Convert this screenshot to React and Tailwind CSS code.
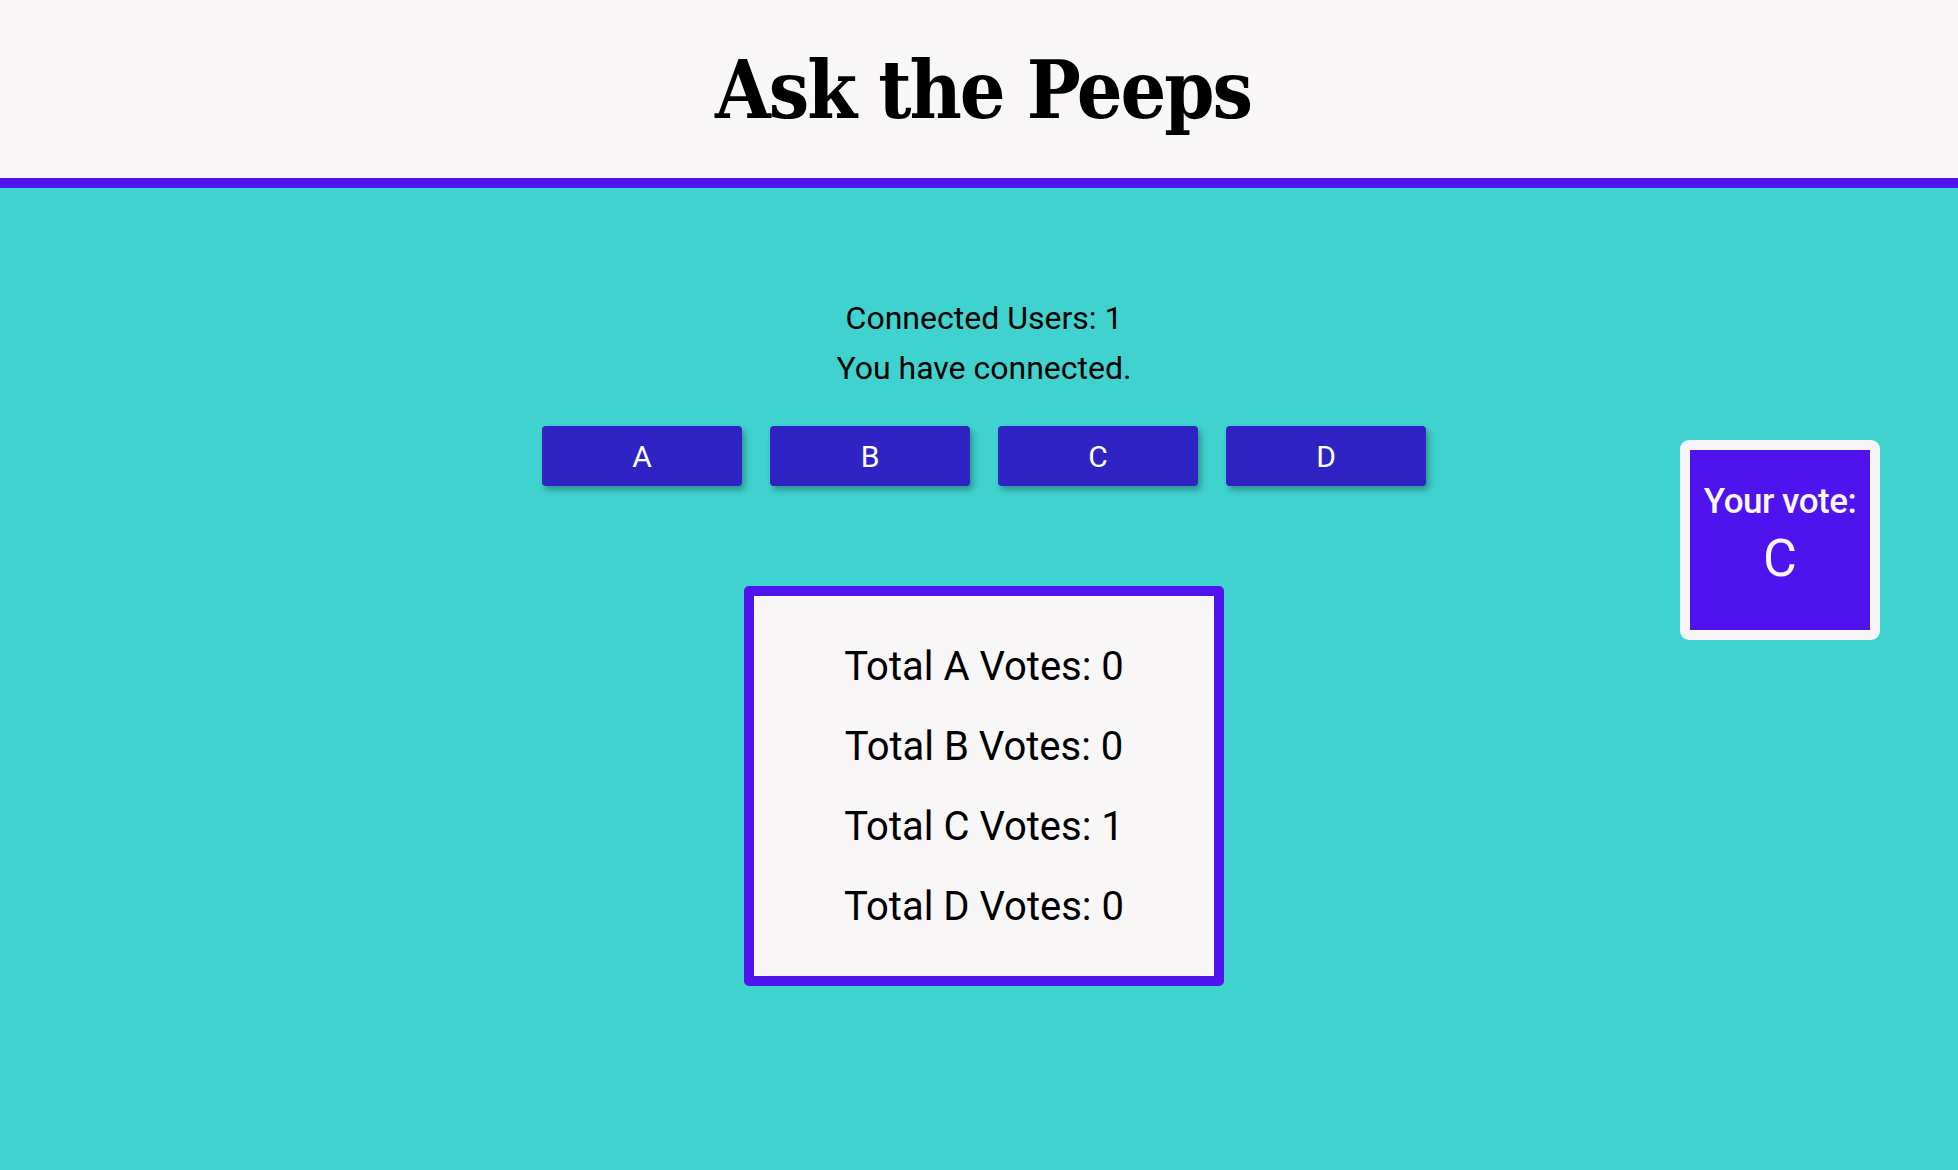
import React from "react";

export default function App() {
  const counts = [
    ["A", 0],
    ["B", 0],
    ["C", 1],
    ["D", 0],
  ];
  return (
    <div className="min-h-[1170px] w-full bg-[#40d2ce] font-['Roboto',sans-serif] text-black">
      <header className="h-[188px] bg-[#f8f6f7] border-b-[10px] border-[#4f14ed] flex items-center justify-center pl-[8px]">
        <h1 className="font-['DejaVu_Serif_Condensed','DejaVu_Serif',serif] font-bold text-[80px] leading-none tracking-[-2px] mt-[2px]">
          Ask the Peeps
        </h1>
      </header>
      <main className="relative flex flex-col items-center pl-[10px] pt-[105px]">
        <p className="text-[32px] leading-[50px]">Connected Users: 1</p>
        <p className="text-[32px] leading-[50px]">You have connected.</p>
        <div className="mt-[33px] flex gap-[28px]">
          {["A", "B", "C", "D"].map((l) => (
            <button
              key={l}
              className="w-[200px] h-[60px] rounded-[4px] bg-[#3023c4] text-white text-[30px] shadow-[3px_4px_6px_rgba(0,0,0,0.3)] flex items-center justify-center"
            >
              {l}
            </button>
          ))}
        </div>
        <div className="mt-[100px] w-[480px] h-[400px] border-[10px] border-[#4f14ed] rounded-[5px] bg-[#f8f6f7] pt-[31px] flex flex-col items-center">
          {counts.map(([l, n]) => (
            <p key={l} className="text-[40px] leading-[80px]">
              Total {l} Votes: {n}
            </p>
          ))}
        </div>
        <div className="absolute right-[78px] top-[252px] w-[200px] h-[200px] rounded-[9px] bg-[#f8f6f7] p-[10px]">
          <div className="w-full h-full bg-[#4f14ed] text-[#f8f6f7] flex flex-col items-center pt-[30px]">
            <p className="text-[35px] font-medium leading-[44px] tracking-[-0.5px]">Your vote:</p>
            <p className="text-[52px] leading-[60px] mt-[5px]">C</p>
          </div>
        </div>
      </main>
    </div>
  );
}
